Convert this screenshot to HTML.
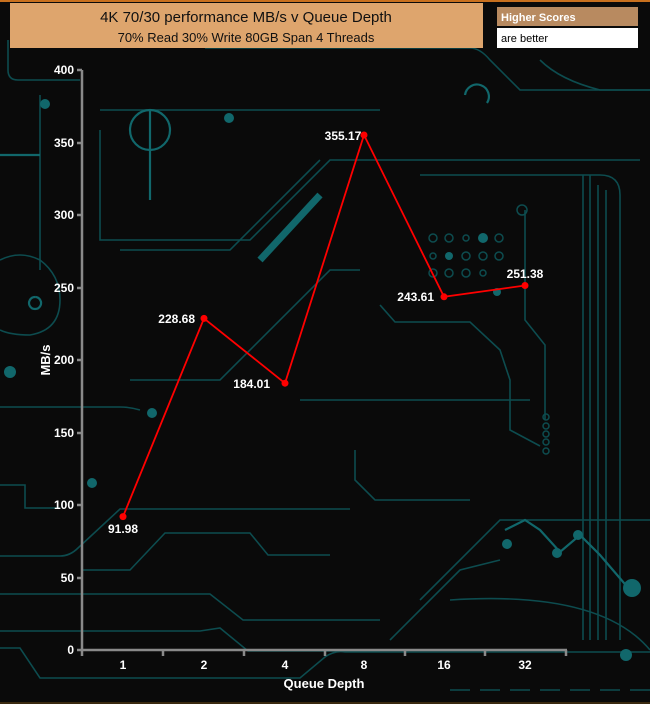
<!DOCTYPE html>
<html><head><meta charset="utf-8"><style>
html,body{margin:0;padding:0;background:#0a0a0a;}
svg{display:block}
</style></head><body>
<svg width="650" height="704" viewBox="0 0 650 704" xmlns="http://www.w3.org/2000/svg" font-family="Liberation Sans, sans-serif">
<rect width="650" height="704" fill="#0a0a0a"/>
<rect width="650" height="2" fill="#c8701e"/>
<rect y="702" width="650" height="2" fill="#3a2a10"/>
<g fill="none" stroke="#0d4c4f" stroke-width="1.6">
<path d="M8 40 V70 Q8 80 18 80 H80"/>
<path d="M205 48 H470 Q480 48 490 60 L520 90 H650"/>
<path d="M540 60 Q560 80 600 90 H650"/>
<path d="M100 110 H380"/>
<path d="M40 95 V270"/>
<path d="M0 260 Q20 250 40 260 Q60 275 60 300 Q60 330 30 335 Q10 335 0 330"/>
<path d="M100 130 V240 H250 L330 160 H640"/>
<path d="M120 250 H230 L320 160"/>
<path d="M130 380 H220 L330 270 H360"/>
<path d="M0 407 H120 Q130 407 140 410"/>
<path d="M0 485 H25 V508 H60"/>
<path d="M0 556 H60 Q70 556 78 548 L120 509 H350"/>
<path d="M82 570 H130 L165 533 H250 L268 555 H330"/>
<path d="M0 594 H210 L243 620 H380"/>
<path d="M0 631 H200 L220 628 L248 651 H380"/>
<path d="M0 648 H20 L40 678 H300 L325 657 Q335 650 345 652 H650"/>
<path d="M380 305 L395 322 H470 L500 350 L510 380 V430 L540 446"/>
<path d="M300 400 H530"/>
<path d="M355 450 V480 L375 500 H470"/>
<path d="M420 175 H600 Q620 175 620 195 V640"/>
<path d="M583 175 V640 M590 175 V640 M598 185 V640 M606 190 V640"/>
<path d="M525 210 V320 L545 345 V420"/>
<path d="M420 600 L500 520 H650"/>
<path d="M390 640 L460 570 L500 560"/>
<path d="M450 690 H650" stroke-dasharray="20 10"/>
<path d="M450 600 Q600 590 650 650"/>
</g>
<g fill="none" stroke="#11676b" stroke-width="2.2">
<path d="M0 155 H40"/>
<path d="M260 260 L320 195" stroke-width="7"/>
<path d="M130 130 a20 20 0 1 0 40 0 a20 20 0 1 0 -40 0"/>
<path d="M150 110 V200"/>
<path d="M465 95 a12 12 0 1 1 22 8"/>
<path d="M505 530 L525 520 L540 530 L560 552 L580 535 L600 555 L630 590"/>
<path d="M35 297 a6 6 0 1 0 0.1 0"/>
</g>
<g fill="#11676b">
<circle cx="92" cy="483" r="5"/><circle cx="45" cy="104" r="5"/><circle cx="229" cy="118" r="5"/>
<circle cx="483" cy="238" r="5"/><circle cx="449" cy="256" r="4"/><circle cx="497" cy="292" r="4"/>
<circle cx="632" cy="588" r="9"/><circle cx="507" cy="544" r="5"/><circle cx="557" cy="553" r="5"/><circle cx="578" cy="535" r="5"/>
<circle cx="626" cy="655" r="6"/><circle cx="10" cy="372" r="6"/><circle cx="152" cy="413" r="5"/>
</g>
<g fill="none" stroke="#0d4c4f" stroke-width="1.5">
<circle cx="433" cy="238" r="4"/><circle cx="449" cy="238" r="4"/><circle cx="466" cy="238" r="3"/><circle cx="499" cy="238" r="4"/>
<circle cx="433" cy="256" r="3"/><circle cx="466" cy="256" r="4"/><circle cx="483" cy="256" r="4"/><circle cx="499" cy="256" r="4"/>
<circle cx="433" cy="273" r="4"/><circle cx="449" cy="273" r="4"/><circle cx="466" cy="273" r="4"/><circle cx="483" cy="273" r="3"/>
<circle cx="546" cy="417" r="3"/><circle cx="546" cy="426" r="3"/><circle cx="546" cy="434" r="3"/><circle cx="546" cy="442" r="3"/><circle cx="546" cy="451" r="3"/>
<circle cx="522" cy="210" r="5"/>
</g>
<rect x="10" y="3" width="473" height="45" fill="#dea56d"/>
<text x="246" y="22" font-size="15" text-anchor="middle" fill="#111">4K 70/30 performance MB/s v Queue Depth</text>
<text x="246" y="42" font-size="13" text-anchor="middle" fill="#111">70% Read 30% Write 80GB Span 4 Threads</text>
<rect x="497" y="7" width="141" height="19" fill="#b88a60"/>
<text x="501" y="21" font-size="11" font-weight="bold" fill="#fff">Higher Scores</text>
<rect x="497" y="28" width="141" height="20" fill="#fff"/>
<text x="501" y="42" font-size="11" fill="#000">are better</text>
<g stroke="#8a8a8a" stroke-width="2.5" fill="none">
<path d="M82 70 V650 H567"/>
<path d="M77 70 H82 M77 143 H82 M77 215 H82 M77 288 H82 M77 360 H82 M77 433 H82 M77 505 H82 M77 578 H82 M77 650 H82"/>
<path d="M82 650 V656 M163 650 V656 M244 650 V656 M325 650 V656 M405 650 V656 M485 650 V656 M566 650 V656"/>
</g>
<g fill="#fff" font-size="12" font-weight="bold" text-anchor="end">
<text x="74" y="74">400</text><text x="74" y="147">350</text><text x="74" y="219">300</text><text x="74" y="292">250</text>
<text x="74" y="364">200</text><text x="74" y="437">150</text><text x="74" y="509">100</text><text x="74" y="582">50</text><text x="74" y="654">0</text>
</g>
<g fill="#fff" font-size="12" font-weight="bold" text-anchor="middle">
<text x="123" y="669">1</text><text x="204" y="669">2</text><text x="285" y="669">4</text><text x="364" y="669">8</text><text x="444" y="669">16</text><text x="525" y="669">32</text>
</g>
<text x="324" y="688" fill="#fff" font-size="13" font-weight="bold" text-anchor="middle">Queue Depth</text>
<text transform="translate(50,360) rotate(-90)" fill="#fff" font-size="13" font-weight="bold" text-anchor="middle">MB/s</text>
<polyline points="123,516.6 204,318.4 285,383.2 364,135 444,296.8 525,285.5" fill="none" stroke="#ff0000" stroke-width="1.8"/>
<g fill="#ff0000">
<circle cx="123" cy="516.6" r="3.5"/><circle cx="204" cy="318.4" r="3.5"/><circle cx="285" cy="383.2" r="3.5"/>
<circle cx="364" cy="135" r="3.5"/><circle cx="444" cy="296.8" r="3.5"/><circle cx="525" cy="285.5" r="3.5"/>
</g>
<g fill="#fff" font-size="12" font-weight="bold">
<text x="123" y="533" text-anchor="middle">91.98</text>
<text x="195" y="323" text-anchor="end">228.68</text>
<text x="270" y="388" text-anchor="end">184.01</text>
<text x="343" y="140" text-anchor="middle">355.17</text>
<text x="434" y="301" text-anchor="end">243.61</text>
<text x="525" y="278" text-anchor="middle">251.38</text>
</g>
</svg>
</body></html>
